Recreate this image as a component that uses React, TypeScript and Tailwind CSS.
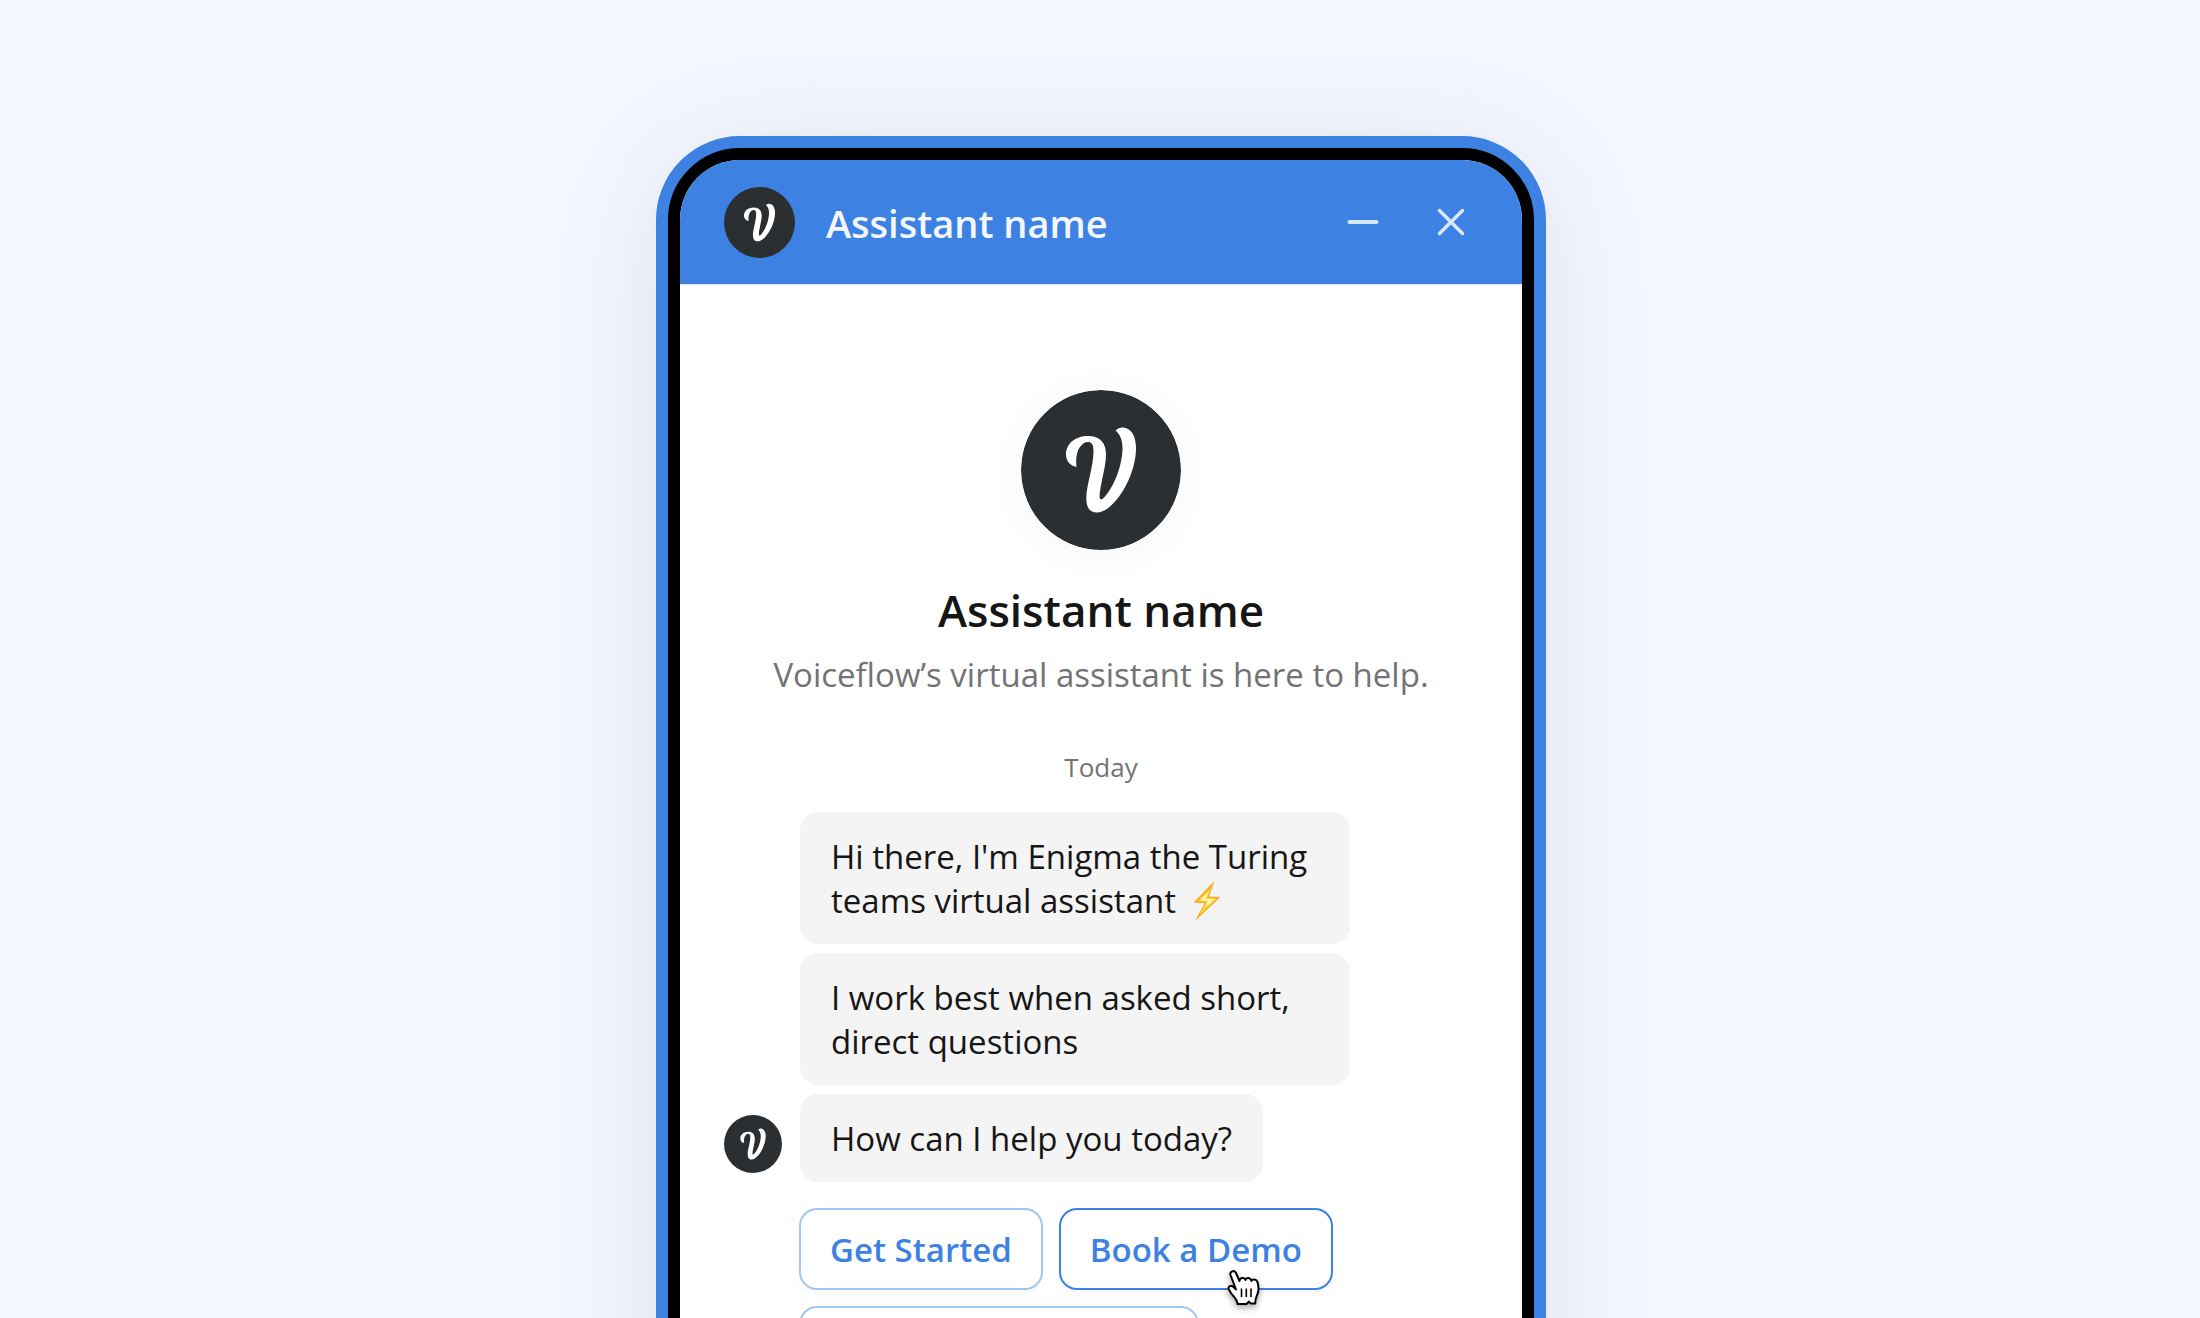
import React from "react";

const FONT = "font-['Open_Sans','Noto_Sans',sans-serif]";

function BrandMark({ className }: { className: string }) {
  return (
    <svg viewBox="0 0 160 160" className={className} aria-hidden="true">
      <circle cx="80" cy="80" r="80" fill="#2b2f32" />
      <path
        fill="#fff"
        d="M55.500 77 C48.500 75.500 45 70.500 45 64.500 C45 54 54 46 67 46 C79 46 85 53 85 64.500 C85 77 79 95 78.600 106 C78.500 109.700 80 110.500 82 108.500 C93 98 101.500 75 101.500 58 C101.500 50.500 99 44 94.500 40.500 C97 38.300 99.500 37.300 102 37.500 C110 37.800 115 46 115 58 C115 88 92 122.500 76 122.500 C68.500 122.500 65.300 117.500 65.300 108 C65.300 95 72.500 77 72.500 61 C72.500 54.500 70.500 52 67 52 C60.500 52 53.500 61 55.500 77 Z"
      />
    </svg>
  );
}

function Bolt() {
  return (
    <svg viewBox="0 0 30 42" className="ml-4 inline-block h-[42px] w-[30px] align-[-9px]" role="img" aria-label="lightning">
      <path d="M22.500 1 L1.500 22.500 L12.500 23.200 L3 41 L28.500 17 L17 16.500 Z" fill="#fcab1d" />
      <path d="M19.500 7 L5.500 21 L14.500 21.700 L7.500 34.500 L25 18.500 L15 18 Z" fill="#ffd83f" />
      <path d="M16.500 12 L8 20.300 L16.500 21 L12.500 28.500 L22 19.500 L13.500 18.900 Z" fill="#fff7c2" />
    </svg>
  );
}

function HandCursor() {
  return (
    <svg viewBox="0 0 34 38" className="pointer-events-none absolute top-[59px] right-[70px] h-[38px] w-[34px] overflow-visible drop-shadow-[0_3px_3px_rgba(0,0,0,0.35)]" aria-hidden="true">
      <path
        d="M10.500 34.500 C10 30.500 7.500 28.500 5.500 26 C3.500 23.500 1.300 20.500 1.500 18.800 C2 16.800 5 16.500 6.500 18 L9 20.500 L3.500 6 C2.300 2.500 7.500 .5 9 4 L12.500 12 C12.500 8.500 17.500 8 18.500 11 C19.500 8 23.500 8.500 24.500 12 C25.500 9.500 29.500 10 30.500 13 C31.500 17 32.300 21 30.500 25 C29.500 28 28 30.500 28.300 34.500 L23.500 34.500 L22 32.500 L19.500 35 L10.500 35 Z"
        fill="#fff" stroke="#000" strokeWidth="2" strokeLinejoin="round"
      />
      <path d="M14.500 19.500 V28 M19.300 19.500 V28 M24 19.500 V28" stroke="#000" strokeWidth="1.600" />
    </svg>
  );
}

function Bubble({ children }: { children: React.ReactNode }) {
  return (
    <p className="max-w-[550px] rounded-[18px] bg-[#f4f4f4] px-[31px] pt-[23px] pb-[21px] text-[33px] leading-[44px] text-[#161616]">
      {children}
    </p>
  );
}

const chip =
  "relative h-[82px] rounded-[18px] border-2 bg-white px-[29px] pt-0.5 text-[33px] leading-[44px] font-semibold text-[#3d82e3] shadow-[0_4px_6px_rgba(0,0,0,0.03)]";

export default function App() {
  return (
    <main className={`h-screen overflow-hidden bg-[#f4f7ff] pt-[136px] pr-4 pl-[18px] ${FONT}`}>
      <section className="mx-auto min-h-[1400px] max-w-[890px] rounded-[84px] border-[12px] border-[#3d82e3] bg-black p-3 shadow-[0_16px_120px_rgba(0,0,0,0.09)]">
        <div className="min-h-[1352px] overflow-hidden rounded-[60px] bg-white">
          <header className="flex h-[124px] items-center bg-[#3d82e3] pr-[51px] pl-11 text-[#f4f7ff]">
            <BrandMark className="size-[71px]" />
            <h1 className="mt-0.5 ml-[31px] flex-1 text-[38px] leading-[52px] font-semibold">Assistant name</h1>
            <button type="button" aria-label="Minimize" className="flex size-10 items-center justify-center">
              <svg viewBox="0 0 40 40" className="size-10" fill="none" stroke="#d9e7fb" strokeWidth="4" strokeLinecap="round">
                <path d="M6.500 20 H33.500" />
              </svg>
            </button>
            <button type="button" aria-label="Close" className="ml-12 flex size-10 items-center justify-center">
              <svg viewBox="0 0 40 40" className="size-10" fill="none" stroke="#d9e7fb" strokeWidth="3.500" strokeLinecap="round">
                <path d="M8.500 8.500 L31.500 31.500 M31.500 8.500 L8.500 31.500" />
              </svg>
            </button>
          </header>

          <div className="flex flex-col items-center border-t border-[#dde9fa] pt-[105px] text-center">
            <BrandMark className="size-[160px] rounded-full shadow-[0_4px_40px_rgba(0,0,0,0.04)]" />
            <h2 className="mt-[30px] text-[44px] leading-[60px] font-semibold text-[#161616]">Assistant name</h2>
            <p className="mt-[11px] text-[33px] leading-[48px] text-[#737376]">Voiceflow’s virtual assistant is here to help.</p>
            <p className="mt-12 text-[26px] leading-[40px] text-[#737376]">Today</p>
          </div>

          <div className="mt-[25px] flex items-end gap-[18px] pl-11">
            <BrandMark className="mb-[9px] size-[58px] shrink-0" />
            <div className="flex flex-col items-start gap-[9px]">
              <Bubble>
                Hi there, I'm Enigma the Turing teams virtual assistant
                <Bolt />
              </Bubble>
              <Bubble>I work best when asked short, direct questions</Bubble>
              <Bubble>How can I help you today?</Bubble>
            </div>
          </div>

          <div className="mt-[26px] flex flex-wrap gap-4 pr-11 pl-[119px]">
            <button type="button" className={`${chip} border-[#a4c6f4]`}>Get Started</button>
            <button type="button" className={`${chip} border-[#3d82e3]`}>
              Book a Demo
              <HandCursor />
            </button>
            <button type="button" aria-label="More options" className={`${chip} w-[400px] border-[#a4c6f4]`} />
          </div>
        </div>
      </section>
    </main>
  );
}
